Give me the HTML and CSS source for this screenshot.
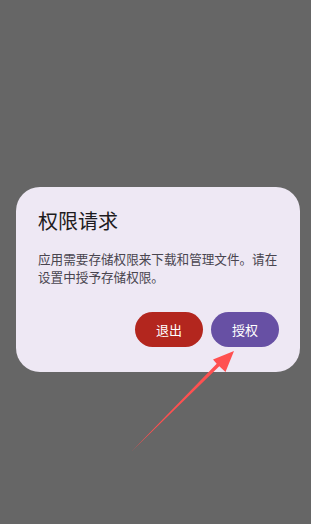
FILE: index.html
```html
<!DOCTYPE html>
<html lang="zh-CN">
<head>
<meta charset="utf-8">
<link rel="stylesheet" href="styles.css">
</head>
<body>
<div class="scrim">
  <div class="dialog">
    <h1 class="title">权限请求</h1>
    <p class="body">应用需要存储权限来下载和管理文件。请在设置中授予存储权限。</p>
    <div class="actions">
      <button class="btn btn-exit">退出</button>
      <button class="btn btn-grant">授权</button>
    </div>
  </div>
</div>
<svg class="arrow" width="311" height="524" viewBox="0 0 311 524">
  <polygon points="132,451 219.3,366.3 225.5,372 234,351 213,359.5 216.7,363.7" fill="#FF5050"/>
</svg>
</body>
</html>
```
FILE: styles.css
```css
html, body {
  margin: 0;
  padding: 0;
  width: 311px;
  height: 524px;
  background: #666666;
  overflow: hidden;
  font-family: "Noto Sans CJK SC", "Noto Sans", sans-serif;
}
.scrim {
  padding: 187px 11px 0 16px;
}
.dialog {
  width: 284px;
  height: 185px;
  box-sizing: border-box;
  background: #EEE8F4;
  border-radius: 24px;
  padding: 21px 21px 25px 22px;
  display: flex;
  flex-direction: column;
}
.title {
  margin: 0;
  font-size: 20px;
  line-height: 26px;
  font-weight: 400;
  color: #1D1B20;
}
.body {
  margin: 16px 0 0 0;
  font-size: 12.6px;
  line-height: 17.5px;
  color: #49454F;
  width: 242px;
}
.actions {
  margin-top: auto;
  display: flex;
  justify-content: flex-end;
  gap: 8px;
}
.btn {
  width: 68px;
  height: 35px;
  border: none;
  border-radius: 18px;
  color: #FFFFFF;
  font-family: "Noto Sans CJK SC", "Noto Sans", sans-serif;
  font-size: 13px;
  padding: 0;
}
.btn-exit { background: #B3261E; }
.btn-grant { background: #6750A4; }
.arrow {
  position: absolute;
  left: 0;
  top: 0;
}
```
